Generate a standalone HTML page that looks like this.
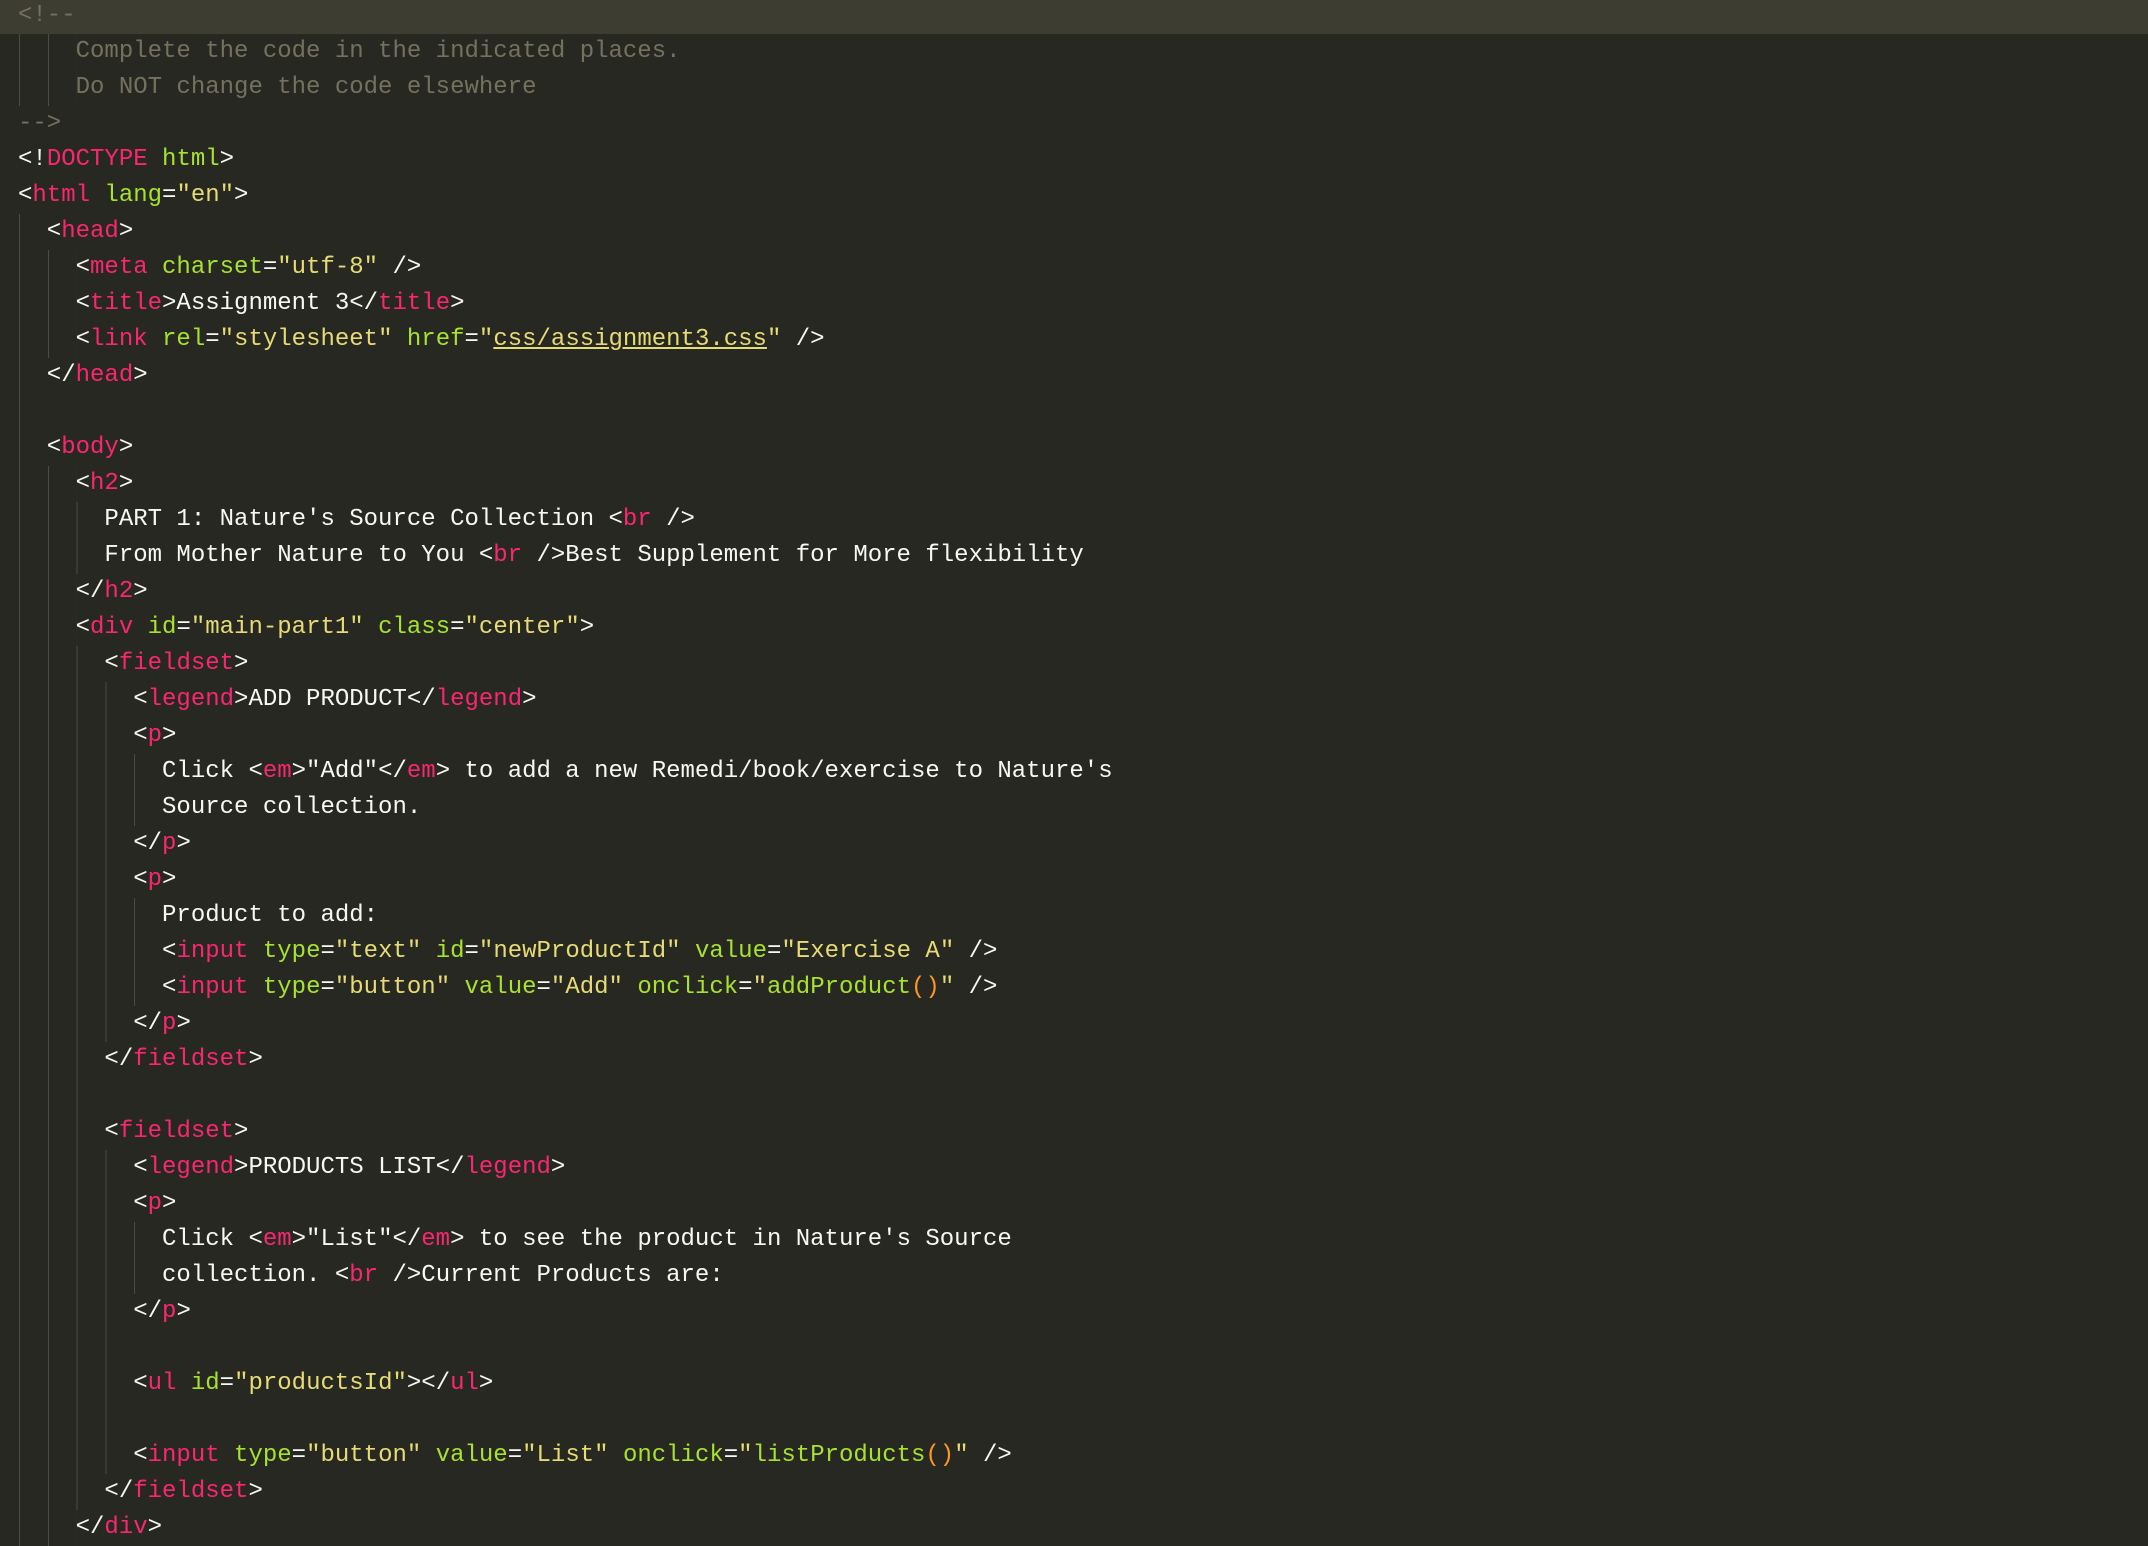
<!DOCTYPE html>
<html><head><meta charset="utf-8"><style>
html,body{margin:0;padding:0;background:#272822;width:2148px;height:1546px;overflow:hidden}
#c{margin-top:-2px;font-family:"Liberation Mono","DejaVu Sans Mono",monospace;font-size:24px;line-height:36px;color:#f8f8f2}
.l{white-space:pre;height:36px;padding-left:18px;background-image:repeating-linear-gradient(to right,#4b4c45 0 1px,transparent 1px 28.8px);background-repeat:no-repeat;background-position:19px 0;background-size:0 100%}
.g1{background-size:28.8px 100%}.g2{background-size:57.6px 100%}.g3{background-size:86.4px 100%}.g4{background-size:115.2px 100%}.g5{background-size:144px 100%}
.hl{background-color:#3e3d32}
.c{color:#75715e}.t{color:#f92672}.a{color:#a6e22e}.s{color:#e6db74}.o{color:#fd971f}.u{text-decoration:underline}
</style></head><body><div id="c">
<div class="l hl"><span class="c">&lt;!--</span></div>
<div class="l g2"><span class="c">    Complete the code in the indicated places.</span></div>
<div class="l g2"><span class="c">    Do NOT change the code elsewhere</span></div>
<div class="l"><span class="c">--&gt;</span></div>
<div class="l">&lt;!<span class="t">DOCTYPE</span> <span class="a">html</span>&gt;</div>
<div class="l">&lt;<span class="t">html</span> <span class="a">lang</span>=<span class="s">"en"</span>&gt;</div>
<div class="l g1">  &lt;<span class="t">head</span>&gt;</div>
<div class="l g2">    &lt;<span class="t">meta</span> <span class="a">charset</span>=<span class="s">"utf-8"</span> /&gt;</div>
<div class="l g2">    &lt;<span class="t">title</span>&gt;Assignment 3&lt;/<span class="t">title</span>&gt;</div>
<div class="l g2">    &lt;<span class="t">link</span> <span class="a">rel</span>=<span class="s">"stylesheet"</span> <span class="a">href</span>=<span class="s">"<span class="u">css/assignment3.css</span>"</span> /&gt;</div>
<div class="l g1">  &lt;/<span class="t">head</span>&gt;</div>
<div class="l g1"> </div>
<div class="l g1">  &lt;<span class="t">body</span>&gt;</div>
<div class="l g2">    &lt;<span class="t">h2</span>&gt;</div>
<div class="l g3">      PART 1: Nature's Source Collection &lt;<span class="t">br</span> /&gt;</div>
<div class="l g3">      From Mother Nature to You &lt;<span class="t">br</span> /&gt;Best Supplement for More flexibility</div>
<div class="l g2">    &lt;/<span class="t">h2</span>&gt;</div>
<div class="l g2">    &lt;<span class="t">div</span> <span class="a">id</span>=<span class="s">"main-part1"</span> <span class="a">class</span>=<span class="s">"center"</span>&gt;</div>
<div class="l g3">      &lt;<span class="t">fieldset</span>&gt;</div>
<div class="l g4">        &lt;<span class="t">legend</span>&gt;ADD PRODUCT&lt;/<span class="t">legend</span>&gt;</div>
<div class="l g4">        &lt;<span class="t">p</span>&gt;</div>
<div class="l g5">          Click &lt;<span class="t">em</span>&gt;"Add"&lt;/<span class="t">em</span>&gt; to add a new Remedi/book/exercise to Nature's</div>
<div class="l g5">          Source collection.</div>
<div class="l g4">        &lt;/<span class="t">p</span>&gt;</div>
<div class="l g4">        &lt;<span class="t">p</span>&gt;</div>
<div class="l g5">          Product to add:</div>
<div class="l g5">          &lt;<span class="t">input</span> <span class="a">type</span>=<span class="s">"text"</span> <span class="a">id</span>=<span class="s">"newProductId"</span> <span class="a">value</span>=<span class="s">"Exercise A"</span> /&gt;</div>
<div class="l g5">          &lt;<span class="t">input</span> <span class="a">type</span>=<span class="s">"button"</span> <span class="a">value</span>=<span class="s">"Add"</span> <span class="a">onclick</span>=<span class="s">"<span class="a">addProduct</span><span class="o">()</span>"</span> /&gt;</div>
<div class="l g4">        &lt;/<span class="t">p</span>&gt;</div>
<div class="l g3">      &lt;/<span class="t">fieldset</span>&gt;</div>
<div class="l g3"> </div>
<div class="l g3">      &lt;<span class="t">fieldset</span>&gt;</div>
<div class="l g4">        &lt;<span class="t">legend</span>&gt;PRODUCTS LIST&lt;/<span class="t">legend</span>&gt;</div>
<div class="l g4">        &lt;<span class="t">p</span>&gt;</div>
<div class="l g5">          Click &lt;<span class="t">em</span>&gt;"List"&lt;/<span class="t">em</span>&gt; to see the product in Nature's Source</div>
<div class="l g5">          collection. &lt;<span class="t">br</span> /&gt;Current Products are:</div>
<div class="l g4">        &lt;/<span class="t">p</span>&gt;</div>
<div class="l g4"> </div>
<div class="l g4">        &lt;<span class="t">ul</span> <span class="a">id</span>=<span class="s">"productsId"</span>&gt;&lt;/<span class="t">ul</span>&gt;</div>
<div class="l g4"> </div>
<div class="l g4">        &lt;<span class="t">input</span> <span class="a">type</span>=<span class="s">"button"</span> <span class="a">value</span>=<span class="s">"List"</span> <span class="a">onclick</span>=<span class="s">"<span class="a">listProducts</span><span class="o">()</span>"</span> /&gt;</div>
<div class="l g3">      &lt;/<span class="t">fieldset</span>&gt;</div>
<div class="l g2">    &lt;/<span class="t">div</span>&gt;</div>
</div></body></html>
